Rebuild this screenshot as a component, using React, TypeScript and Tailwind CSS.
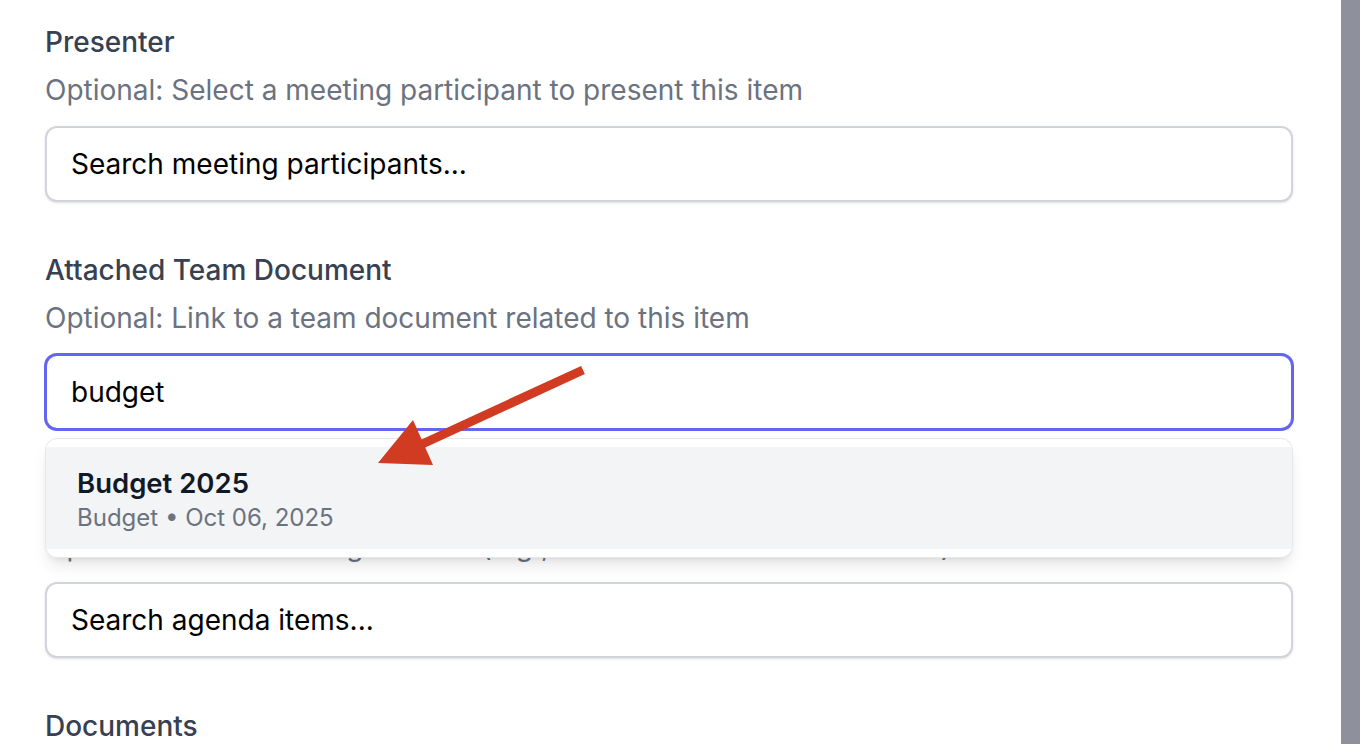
import React from 'react'

interface Field {
  label: string
  hint: string
  value?: string
  placeholder: string
  focused?: boolean
}

const fields: Field[] = [
  {
    label: 'Presenter',
    hint: 'Optional: Select a meeting participant to present this item',
    placeholder: 'Search meeting participants...',
  },
  {
    label: 'Attached Team Document',
    hint: 'Optional: Link to a team document related to this item',
    value: 'budget',
    placeholder: 'Search team documents...',
    focused: true,
  },
  {
    label: 'Parent Agenda Item',
    hint: 'Optional: Select the original item (e.g., if this one continues a thread)',
    placeholder: 'Search agenda items...',
  },
]

function SearchField({ field, children }: { field: Field; children?: React.ReactNode }) {
  return (
    <div className="relative mb-[48px]">
      <div className="text-[28px] leading-[40px] font-medium text-[#374151]">{field.label}</div>
      <div className="mt-[8px] text-[28px] leading-[40px] text-[#6b7280]">{field.hint}</div>
      <div className="relative mt-[16px]">
        <input
          readOnly
          value={field.value ?? ''}
          placeholder={field.placeholder}
          className={
            field.focused
              ? 'h-[76px] w-full rounded-[12px] border-2 border-[#6366f1] bg-white px-[24px] text-[28px] text-black outline-none ring-1 ring-[#6366f1]'
              : 'h-[76px] w-full rounded-[12px] border-2 border-[#d1d5db] bg-white px-[24px] text-[28px] text-black shadow-sm outline-none placeholder:text-black'
          }
        />
        {children}
      </div>
    </div>
  )
}

export default function App() {
  return (
    <div className="flex h-[744px] w-full overflow-hidden bg-white font-['Inter',sans-serif]">
      <div className="relative flex-1 pl-[45px] pr-[48px] pt-[22px]">
        {fields.map((f) =>
          f.focused ? (
            <SearchField key={f.label} field={f}>
              {/* results dropdown */}
              <div className="absolute left-0 right-0 top-[84px] z-10 rounded-[12px] border border-[#e5e7eb] bg-white py-[8px] shadow-lg">
                <div className="bg-[#f3f4f6] px-[31px] pb-[15px] pt-[18px]">
                  <div className="text-[27.5px] leading-[36px] font-semibold text-[#111827]">Budget 2025</div>
                  <div className="mt-[1px] text-[24px] leading-[32px] text-[#6b7280]">Budget • Oct 06, 2025</div>
                </div>
              </div>
            </SearchField>
          ) : (
            <SearchField key={f.label} field={f} />
          )
        )}
        <div className="text-[28px] leading-[40px] font-medium text-[#374151]">Documents</div>

        {/* annotation arrow */}
        <svg className="pointer-events-none absolute left-0 top-0 z-20" width="1341" height="744">
          <line x1="583" y1="370" x2="418" y2="446" stroke="#d13b21" strokeWidth="9" />
          <polygon points="378,463 413,420 433,465" fill="#d13b21" />
        </svg>
      </div>
      <div className="w-[19px] bg-[#8e919b]" />
    </div>
  )
}
